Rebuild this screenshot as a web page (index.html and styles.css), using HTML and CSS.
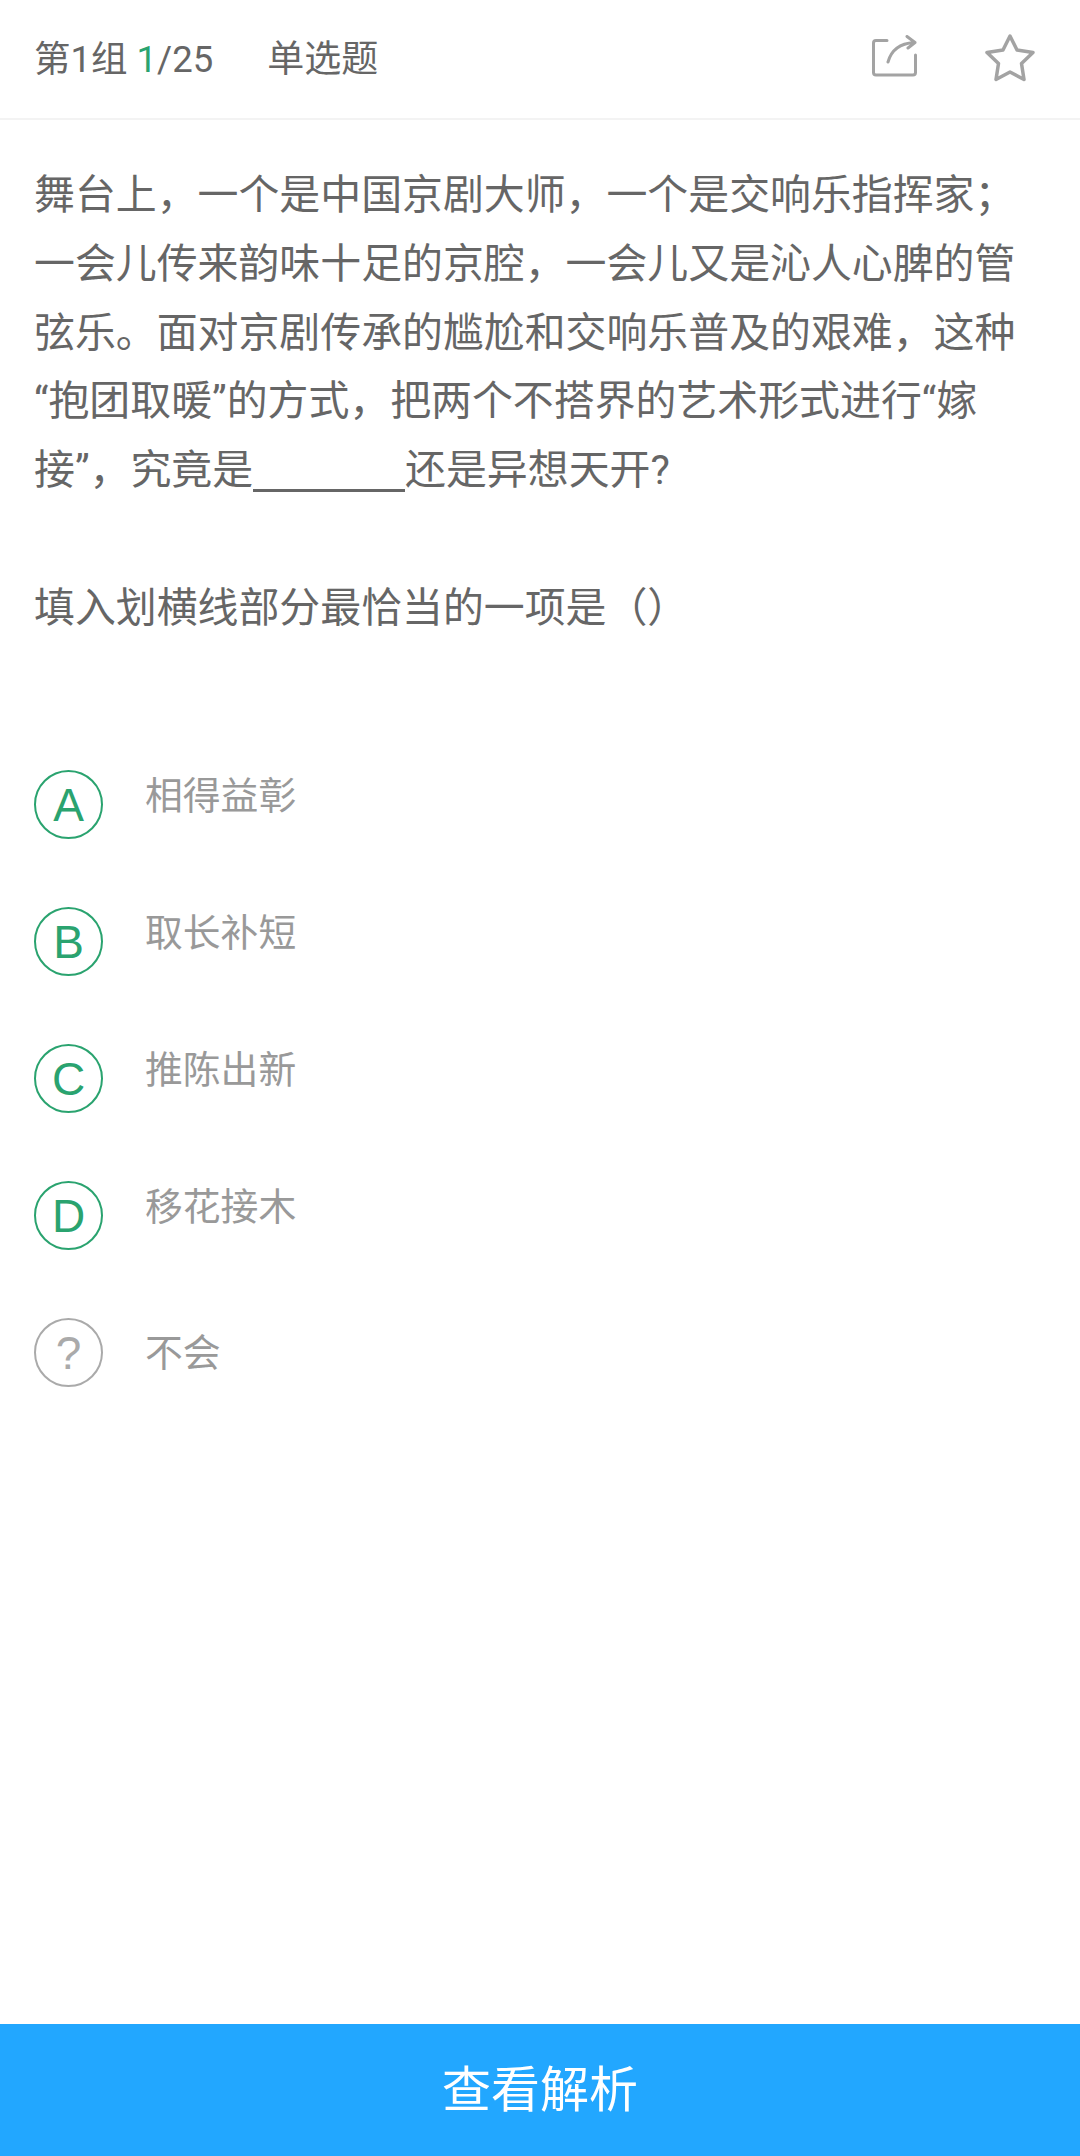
FILE: index.html
```html
<!DOCTYPE html>
<html lang="zh-CN">
<head>
  <meta charset="UTF-8" />
  <title>查看解析</title>
  <link rel="stylesheet" href="styles.css">
</head>
<body>

<div class="page">
  <div class="topbar">
    <span class="count">第1组 <em>1</em>/25</span>
    <span class="type">单选题</span>
    <svg class="icon-share" width="46" height="42" viewBox="0 0 46 42">
      <path d="M15 5.500H4Q1.500 5.500 1.500 8V37.500Q1.500 40 4 40H41Q43.500 40 43.500 37.500V20" fill="none" stroke="#a3a3a3" stroke-width="3" stroke-linecap="round" stroke-linejoin="round" />
      <path d="M16 27C19 16 27 8.500 42 7.500M35 1.500L43 7.500L36 13" fill="none" stroke="#a3a3a3" stroke-width="3" stroke-linecap="round" stroke-linejoin="round" />
    </svg>
    <svg class="icon-star" width="52" height="50" viewBox="0 0 52 50">
      <path d="M26 3L33 17L49 19.500L37.500 30.500L40 46.500L26 39L12 46.500L14.500 30.500L3 19.500L19 17Z" fill="none" stroke="#a3a3a3" stroke-width="3.500" stroke-linejoin="round" />
    </svg>
  </div>

  <div class="question">
    舞台上，一个是中国京剧大师，一个是交响乐指挥家；一会儿传来韵味十足的京腔，一会儿又是沁人心脾的管弦乐。面对京剧传承的尴尬和交响乐普及的艰难，这种“抱团取暖”的方式，把两个不搭界的艺术形式进行“嫁接”，究竟是<span class="blank"></span>还是异想天开?<br><br>填入划横线部分最恰当的一项是（）
  </div>

  <div class="options">
    <div class="option"><span class="circle">A</span><span class="label">相得益彰</span></div>
    <div class="option"><span class="circle">B</span><span class="label">取长补短</span></div>
    <div class="option"><span class="circle">C</span><span class="label">推陈出新</span></div>
    <div class="option"><span class="circle">D</span><span class="label">移花接木</span></div>
    <div class="option unknown"><span class="circle">?</span><span class="label">不会</span></div>
  </div>

  <div class="submit">查看解析</div>
</div>

</body>
</html>
```

FILE: styles.css
```css
body {
  margin: 0;
  background: #fff;
  font-family: Roboto, "Noto Sans CJK SC", sans-serif;
  color: #666;
}

.page {
  display: flex;
  flex-direction: column;
  height: 2156px;
}

.topbar {
  display: flex;
  align-items: center;
  height: 112px;
  padding: 0 34px 6px;
  border-bottom: 2px solid #f3f3f3;
  font-size: 36.500px;
}

.count em {
  font-style: normal;
  color: #2aa36f;
}

.type {
  margin-left: 54px;
  flex: 1;
  font-size: 37px;
}

.icon-share {
  margin-right: 66px;
}

.icon-star {
  margin: 4px 10px 0 0;
}

.question {
  padding: 41px 34px 0;
  font-size: 40.900px;
  line-height: 68.800px;
}

.blank {
  display: inline-block;
  width: 152px;
  height: 50px;
  border-bottom: 3px solid #666;
  vertical-align: -8px;
}

.options {
  flex: 1;
  padding: 0 34px;
  margin-top: 127px;
}

.option {
  display: flex;
  height: 137px;
}

.circle {
  box-sizing: border-box;
  width: 69px;
  height: 69px;
  border: 2px solid #2aa36f;
  border-radius: 50%;
  color: #2aa36f;
  font-family: "Liberation Sans", sans-serif;
  font-size: 46px;
  line-height: 67px;
  text-align: center;
}

.label {
  margin-left: 42px;
  font-size: 37.800px;
  line-height: 52px;
  color: #999;
}

.unknown .circle {
  border-color: #aaa;
  color: #aaa;
}

.unknown .label {
  line-height: 71px;
}

.submit {
  height: 132px;
  background: #22a7ff;
  color: #fff;
  font-size: 49px;
  line-height: 134px;
  text-align: center;
}
```
